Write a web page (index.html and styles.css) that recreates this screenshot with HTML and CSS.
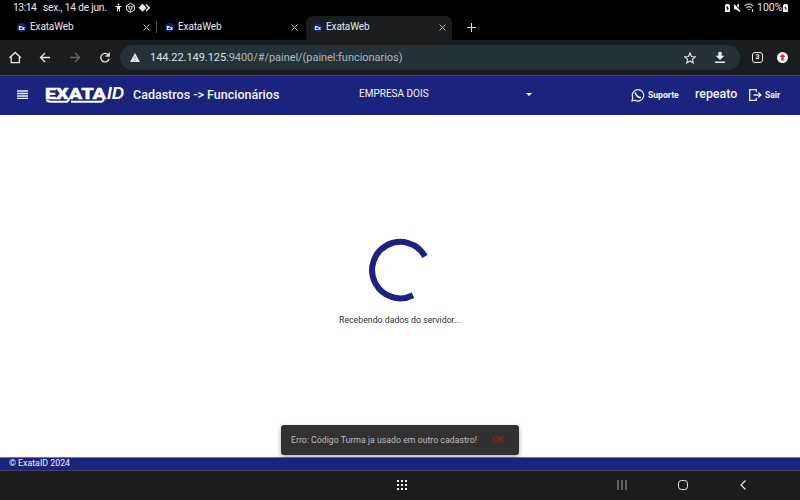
FILE: index.html
```
<!DOCTYPE html>
<html lang="pt-BR">
<head>
<meta charset="utf-8">
<title>ExataWeb</title>
<link rel="stylesheet" href="styles.css">
</head>
<body>
<div class="status">
  <span class="clock">13:14</span><span class="date">sex., 14 de jun.</span>
  <svg class="status-icons" width="38" height="12" viewBox="0 0 38 12" fill="none" stroke="#eee"><circle cx="4.500" cy="2.500" r="1" fill="#eee" stroke="none"/><path d="M1.500 4.500H7.500M4.500 4.500V7M3.500 4.500V9.500M5.500 4.500V9.500"/><path d="M16.500 1.300l3.900 2.300v4.500l-3.900 2.300-3.900-2.300V3.600z"/><circle cx="16.500" cy="5.800" r="1.600"/><path d="M12.600 3.600l3 1.500M20.400 3.600l-3 1.500M16.500 10V7.500" stroke-width=".7"/><path d="M28.500 1.700l4 4-4 4-4-4z" fill="#eee" stroke="none"/><path d="M32 2.500l3.200 3.200-3.200 3.200" stroke-width="1.500"/></svg>
  <svg class="status-right" width="33" height="12" viewBox="0 0 33 12"><path d="M2 2h3v.8h1V10H1V2.800h1z" fill="#eee"/><path d="M3.500 4.500L2.600 6h.9v2l.9-1.700h-.9z" fill="#000" stroke="#000" stroke-width=".6"/><path d="M10 4h2l3-2.500v8L12 7.500h-2z" fill="#eee"/><path d="M10 1.500l7 8" stroke="#000" stroke-width="1.500"/><path d="M10 2.500l6 7" stroke="#eee" stroke-width="1.200"/><path d="M20.500 4q4.500-4 9 0M22.200 6q2.800-2.500 5.600 0M23.800 7.900q1.200-1 2.400 0" fill="none" stroke="#aaa" stroke-width="1.200"/><path d="M28.500 7v3" stroke="#ddd"/></svg>
  <span class="percent">100%</span>
  <svg class="battery" width="5" height="8" viewBox="0 0 5 8"><path d="M1 0h3v.8h1V8H0V.8h1z" fill="#eee"/><path d="M2.500 2.500L1.700 4h1.600L2.500 6" stroke="#111" stroke-width=".8" fill="none"/></svg>
</div>
<div class="tabs">
  <div class="tab"><span class="fav">Ex</span><span class="tab-name">ExataWeb</span><svg class="close" width="7" height="7"><path d="M.5 .5l6 6M6.500 .5l-6 6"/></svg></div>
  <div class="tab divided"><span class="fav">Ex</span><span class="tab-name">ExataWeb</span><svg class="close" width="7" height="7"><path d="M.5 .5l6 6M6.500 .5l-6 6"/></svg></div>
  <div class="tab active"><span class="fav">Ex</span><span class="tab-name">ExataWeb</span><svg class="close" width="7" height="7"><path d="M.5 .5l6 6M6.500 .5l-6 6"/></svg></div>
  <svg class="plus" width="9" height="9"><path d="M4.500 0v9M0 4.500h9"/></svg>
</div>
<div class="toolbar">
  <svg class="nav-icons" width="120" height="35" viewBox="0 0 120 35" fill="none" stroke="#e8eaed" stroke-width="1.300"><path d="M9.500 17.800L15.200 12.500l5.700 5.300M11.200 16.500v6.200h8.200v-6.200"/><path d="M50 17.500h-9.500M45 13l-4.500 4.500L45 22"/><path d="M70 17.500h9.500M75 13l4.500 4.500L75 22" stroke="#62686b"/><path d="M108.700 15.300a4.300 4.300 0 1 0 .5 3.500M109.200 12.500v3.500h-3.600"/></svg>
  <div class="address">
    <svg class="warn" width="10" height="9"><path d="M5 0l5 9H0z" fill="#e3e8ea"/><path d="M5 3.500v2.500M5 7v1" stroke="#697579" stroke-width=".8"/></svg>
    <span class="url"><b>144.22.149.125</b>:9400/#/painel/(painel:funcionarios)</span>
    <svg class="star" width="12" height="12" viewBox="0 0 12 12"><path d="M6 1l1.500 3.500 3.800.3-2.900 2.500.9 3.700L6 9l-3.300 2 .9-3.700L.7 4.800l3.800-.3z" fill="none" stroke="#e3e8ea" stroke-width="1.100"/></svg>
    <svg class="download" width="10" height="11"><path d="M3.300 0h3.400v3.700h2.600L5 8 .7 3.700h2.600zM0 9.500h10V11H0z" fill="#e3e8ea"/></svg>
  </div>
  <span class="count">3</span>
  <svg class="update" width="11" height="11"><circle cx="5.500" cy="5.500" r="5.500" fill="#f6f3f3"/><path d="M5.500 2l3 3H6.700v3.500H4.300V5H2.500z" fill="#c6323c"/></svg>
</div>
<header class="header">
  <svg class="menu" width="11" height="9"><path d="M0 1h11M0 3.500h11M0 6h11M0 8.500h11" stroke="#eef" stroke-width="1.300"/></svg>
  <svg class="logo" width="80" height="20" viewBox="0 0 80 20"><g fill="#fff"><text class="logo-main" x="0" y="12.500" textLength="61" lengthAdjust="spacingAndGlyphs">EXATA</text><text class="logo-id" x="62" y="12.500" textLength="17" lengthAdjust="spacingAndGlyphs">ID</text></g><path d="M1.500 13.800q1 2 4 2H22l2.500-2.500M26 15.800h29q3 0 4-2.500" fill="none" stroke="#fff" stroke-width="2"/></svg>
  <span class="title">Cadastros -&gt; Funcionários</span>
  <span class="company">EMPRESA DOIS</span>
  <svg class="caret" width="6" height="3"><path d="M0 0h6L3 3z" fill="#fff"/></svg>
  <svg class="whats" width="14" height="14" viewBox="0 0 14 14" fill="none" stroke="#eef"><path d="M1 13l.8-3.300A5.700 5.700 0 1 1 4 12.200z" stroke-width="1.200"/><path d="M4.500 4.300q-.5 2 1.600 3.800 2 1.900 3.800 1.200" stroke-width="1.700"/></svg>
  <span class="support">Suporte</span>
  <span class="user">repeato</span>
  <svg class="exit" width="13" height="12" viewBox="0 0 13 12" fill="none" stroke="#eef" stroke-width="1.300"><path d="M7.300 3V.7H.7v10.600h6.600V9M4.500 6H12M9.300 3.500L12 6 9.300 8.500"/></svg>
  <span class="leave">Sair</span>
</header>
<main class="main">
  <svg class="spinner" width="64" height="64" viewBox="0 0 64 64"><path d="M57 18.500A28.200 28.200 0 1 0 45 57.300" fill="none" stroke="#1a237e" stroke-width="6"/></svg>
  <span class="loading">Recebendo dados do servidor...</span>
</main>
<footer class="footer">© ExataID 2024</footer>
<div class="system">
  <svg class="apps" width="10" height="10" fill="#f0f2f2"><path d="M0 0h2v2H0zM4 0h2v2H4zM8 0h2v2H8zM0 4h2v2H0zM4 4h2v2H4zM8 4h2v2H8zM0 8h2v2H0zM4 8h2v2H4zM8 8h2v2H8z"/></svg>
  <svg class="recents" width="10" height="10"><path d="M1 0v10M5 0v10M9 0v10" stroke="#a5a9aa"/></svg>
  <span class="home"></span>
  <svg class="back" width="6" height="10"><path d="M5.500 .5L1 5l4.500 4.500" fill="none" stroke="#eee" stroke-width="1.100"/></svg>
</div>
<div class="toast"><span class="message">Erro: Código Turma ja usado em outro cadastro!</span><span class="ok">OK</span></div>
</body>
</html>
```
FILE: styles.css
```
* { box-sizing: border-box; }
body { margin: 0; width: 800px; height: 500px; overflow: hidden; display: flex; flex-direction: column; font-family: Roboto, sans-serif; background: #fff; color: #e8eaed; position: relative; }
svg { display: block; flex: none; }
span { white-space: nowrap; flex: none; }
.status { height: 16px; flex: none; background: #000; display: flex; align-items: center; padding: 0 12px 0 13px; font-size: 10px; line-height: 16px; }
.clock { width: 30px; letter-spacing: -.45px; font-size: 10.300px; }
.date { width: 71px; letter-spacing: -.16px; font-size: 10.100px; }
.status-icons { margin-top: -1px; }
.status-right { margin-left: auto; margin-top: -1px; }
.percent { width: 25px; font-size: 10.500px; }
.battery { margin-left: 1px; margin-top: -1px; }
.tabs { height: 24px; flex: none; background: #000; display: flex; align-items: center; padding-left: 8px; }
.tab { width: 148px; height: 24px; padding: 0 6px 2px 9px; display: flex; align-items: center; font-size: 10px; letter-spacing: -.13px; }
.divided { background: linear-gradient(#555, #555) 0 5px / 1px 12px no-repeat; }
.active { background: #191d1f; border-radius: 7px 7px 0 0; box-shadow: inset 2px 0 #000; }
.fav { width: 9px; height: 9px; border-radius: 50%; background: #1b216e; color: #fff; font-size: 6px; line-height: 9px; font-weight: 700; text-align: center; margin-right: 4px; }
.tab-name { line-height: 14px; }
.close { margin-left: auto; stroke: #bbb; }
.plus { margin-left: 15px; margin-bottom: 2px; stroke: #ddd; }
.toolbar { height: 36px; flex: none; display: flex; align-items: center; background: #191d1f; border-bottom: 1px solid #43494c; }
.address { width: 620px; height: 25px; border-radius: 13px; background: #233237; display: flex; align-items: center; padding-left: 10px; }
.url { width: 534px; margin-left: 10px; color: #b0b9bd; font-size: 11px; letter-spacing: -.045px; }
.url b { color: #dce2e4; font-weight: 400; }
.download { margin-left: 19px; }
.count { margin-left: 12px; width: 11px; height: 11px; border: 1px solid #e8eaed; border-radius: 3px; font-size: 7px; font-weight: 700; line-height: 9px; text-align: center; }
.update { margin-left: 14px; }
.header { height: 39px; flex: none; background: #1a237e; display: flex; align-items: center; padding-left: 17px; padding-bottom: 1px; color: #f3f4ff; }
.menu { margin-top: -1px; }
.logo { margin-left: 17px; margin-top: 1px; }
.logo-main { font: 900 14.500px Roboto, sans-serif; stroke: #fff; stroke-width: .35px; }
.logo-id { font: italic 700 16px "Liberation Sans", sans-serif; }
.title { width: 226px; margin-left: 8px; font-size: 12.500px; font-weight: 500; margin-top: -1px; }
.company { width: 167px; font-size: 10px; margin-top: -3px; }
.caret { margin-top: -2px; }
.whats { margin-left: 99px; }
.support { width: 47px; margin-left: 3px; font-size: 8.700px; font-weight: 700; letter-spacing: -.05px; margin-top: -1px; }
.user { width: 54px; font-size: 12.400px; font-weight: 500; margin-top: -4px; }
.exit { margin-left: 0; }
.leave { margin-left: 3px; font-size: 8.500px; font-weight: 700; margin-top: -1px; }
.main { height: 342px; flex: none; display: flex; flex-direction: column; align-items: center; padding-top: 123px; color: #303030; }
.loading { margin-top: 12px; font-size: 8.750px; line-height: 12px; }
.footer { height: 14px; flex: none; background: #1a237e; border-top: 1px solid #7177a3; border-bottom: 1px solid #45435c; padding-left: 9px; font-size: 8.800px; line-height: 11px; color: #f2f3ff; }
.system { height: 29px; flex: none; background: #191d1f; display: flex; align-items: center; padding-left: 397px; padding-bottom: 1px; }
.recents { margin-left: 210px; }
.home { width: 10px; height: 10px; border: 1px solid #eee; border-radius: 3.500px; margin-left: 51px; }
.back { margin-left: 52px; }
.toast { position: absolute; left: 281px; top: 425px; width: 238px; height: 30px; border-radius: 3px; background: #313131; box-shadow: 0 2px 5px #0005; display: flex; align-items: center; padding-left: 10px; padding-bottom: 1px; font-size: 8.750px; color: #bdbdbd; }
.message { width: 201px; }
.ok { color: #8e2420; font-weight: 500; }
```
